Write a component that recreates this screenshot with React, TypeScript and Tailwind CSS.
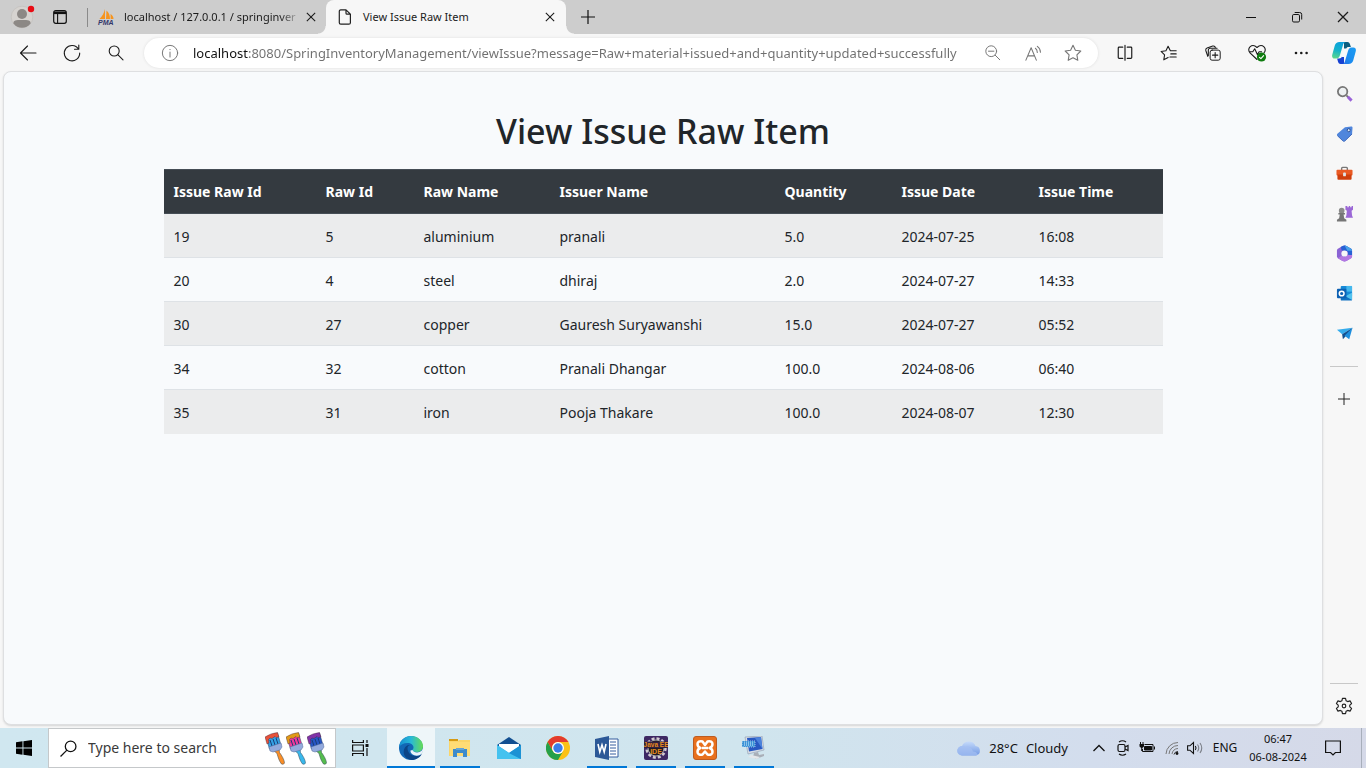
import type { ReactNode } from "react";

type Issue = { id: number; rawId: number; rawName: string; issuer: string; quantity: string; date: string; time: string };

const issues: Issue[] = [
  { id: 19, rawId: 5, rawName: "aluminium", issuer: "pranali", quantity: "5.0", date: "2024-07-25", time: "16:08" },
  { id: 20, rawId: 4, rawName: "steel", issuer: "dhiraj", quantity: "2.0", date: "2024-07-27", time: "14:33" },
  { id: 30, rawId: 27, rawName: "copper", issuer: "Gauresh Suryawanshi", quantity: "15.0", date: "2024-07-27", time: "05:52" },
  { id: 34, rawId: 32, rawName: "cotton", issuer: "Pranali Dhangar", quantity: "100.0", date: "2024-08-06", time: "06:40" },
  { id: 35, rawId: 31, rawName: "iron", issuer: "Pooja Thakare", quantity: "100.0", date: "2024-08-07", time: "12:30" },
];

const columns = [
  { label: "Issue Raw Id", width: "w-[152px]" },
  { label: "Raw Id", width: "w-[98px]" },
  { label: "Raw Name", width: "w-[136px]" },
  { label: "Issuer Name", width: "w-[225px]" },
  { label: "Quantity", width: "w-[117px]" },
  { label: "Issue Date", width: "w-[137px]" },
  { label: "Issue Time", width: "w-[134px]" },
];

/* Line icon on a 20 unit grid */
function Line({ children, className = "size-5", width = 1.1 }: { children: ReactNode; className?: string; width?: number }) {
  return (
    <svg viewBox="0 0 20 20" className={className} fill="none" stroke="currentColor" strokeWidth={width} strokeLinecap="round" strokeLinejoin="round" aria-hidden="true">
      {children}
    </svg>
  );
}

function IconButton({ label, className, children }: { label: string; className: string; children: ReactNode }) {
  return (
    <button type="button" aria-label={label} className={`flex shrink-0 items-center justify-center ${className}`}>
      {children}
    </button>
  );
}

const Cross = ({ className }: { className: string }) => (
  <svg viewBox="0 0 12 12" className={className} stroke="currentColor" strokeWidth="1.3" aria-hidden="true">
    <path d="M1 1l10 10M11 1L1 11" />
  </svg>
);

const starPath = "M10 2.2l2.4 5 5.4.8-3.9 3.8.9 5.5-4.8-2.6-4.8 2.6.9-5.5L2.2 8l5.400-.8z";

function TabStrip() {
  return (
    <header className="flex h-[34px] shrink-0 bg-[#cdcdcd] text-[#1b1b1b]">
      <IconButton label="Profile" className="w-11">
        <svg viewBox="0 0 26 26" className="size-[26px]" aria-hidden="true">
          <circle cx="13" cy="13" r="10.8" fill="#d6d3d0" stroke="#bfbcb8" strokeWidth=".6" />
          <circle cx="13" cy="10" r="5" fill="#8c8885" />
          <path d="M4.4 19.5c0-3 2-3.4 8.600-3.400s8.600.4 8.600 3.400A10.800 10.800 0 0 1 4.400 19.500z" fill="#8c8885" />
          <circle cx="22" cy="5" r="3.200" fill="#e80c14" />
        </svg>
      </IconButton>
      <IconButton label="Tab actions" className="w-8">
        <svg viewBox="0 0 14 14" className="size-[14px]" fill="none" stroke="#111" aria-hidden="true">
          <rect x=".7" y=".7" width="12.600" height="12.600" rx="2" strokeWidth="1.200" />
          <path d="M1 2.800h12" strokeWidth="2.600" />
          <path d="M4.600 4v9" strokeWidth="1.100" />
        </svg>
      </IconButton>
      <div className="ml-[11px] h-[19px] w-px self-center bg-[#8a8a8a]" />
      <div className="flex w-[238px] items-center pl-[9px] pr-[5px]">
        <svg viewBox="0 0 18 16" className="h-4 w-[18px] shrink-0" aria-hidden="true">
          <path d="M8 0v10H2.500C5 7.500 7 4.500 8 0zM9.500 1.500c2.500 2 3.500 5 3.500 8.500H9zM13.500 5c2 1.200 3 3 3 5h-2.800z" fill="#f7941d" />
          <text x="1" y="16" fontSize="7" fontWeight="700" fontStyle="italic" fontFamily="Liberation Sans, sans-serif" fill="#33366b" stroke="none">PMA</text>
        </svg>
        <a href="#phpmyadmin" className="ml-[9px] min-w-0 flex-1 overflow-hidden whitespace-nowrap text-[11px] leading-4 [mask-image:linear-gradient(90deg,#000_88%,transparent)]">
          localhost / 127.0.0.1 / springinver
        </a>
        <IconButton label="Close tab" className="size-5">
          <Cross className="size-[10px]" />
        </IconButton>
      </div>
      <div className="relative flex w-[240px] items-center rounded-t-lg bg-[#f7f7f7] pl-3 pr-[6px]">
        <span className="absolute -left-2 bottom-0 size-2 bg-[radial-gradient(circle_at_0_0,transparent_7px,#f7f7f7_8px)]" />
        <span className="absolute -right-2 bottom-0 size-2 bg-[radial-gradient(circle_at_100%_0,transparent_7px,#f7f7f7_8px)]" />
        <svg viewBox="0 0 14 16" className="h-4 w-[14px]" fill="none" stroke="#222" strokeWidth="1.200" strokeLinejoin="round" aria-hidden="true">
          <path d="M2.800.8H8l4.400 4.400v8.500a1.500 1.500 0 0 1-1.500 1.500H2.800a1.500 1.500 0 0 1-1.500-1.500V2.300A1.500 1.500 0 0 1 2.800.8zM8 .8v3.400a1 1 0 0 0 1 1h3.400" />
        </svg>
        <a href="#viewIssue" className="ml-[11px] flex-1 whitespace-nowrap text-[11px] leading-4">View Issue Raw Item</a>
        <IconButton label="Close tab" className="size-5">
          <Cross className="size-[10px]" />
        </IconButton>
      </div>
      <IconButton label="New tab" className="w-[43px]">
        <svg viewBox="0 0 14 14" className="size-[14px]" stroke="#111" strokeWidth="1.200" aria-hidden="true">
          <path d="M7 0v14M0 7h14" />
        </svg>
      </IconButton>
      <div className="ml-auto flex">
        <IconButton label="Minimize" className="w-[46px]">
          <svg viewBox="0 0 10 10" className="size-[10px]" stroke="#111" aria-hidden="true"><path d="M0 5.500h10" /></svg>
        </IconButton>
        <IconButton label="Restore" className="w-[46px]">
          <svg viewBox="0 0 10 10" className="size-[10px] overflow-visible" fill="none" stroke="#111" aria-hidden="true">
            <rect x=".5" y="2.500" width="7" height="7.500" rx="1.300" />
            <path d="M2.700.5h5a2 2 0 0 1 2 2v5" />
          </svg>
        </IconButton>
        <IconButton label="Close" className="w-[46px]">
          <Cross className="size-3" />
        </IconButton>
      </div>
    </header>
  );
}

function Toolbar() {
  return (
    <nav aria-label="Browser" className="flex h-[37px] shrink-0 items-center bg-[#f7f7f7] pl-[6px] pt-px text-[#1b1b1b]">
      <IconButton label="Back" className="h-8 w-11"><Line><path d="M18 10H2.500M9.500 3l-7 7 7 7" /></Line></IconButton>
      <IconButton label="Refresh" className="h-8 w-11"><Line><path d="M16.500 6A7.700 7.700 0 1 0 17.700 10M16.800 2v4.300h-4.300" /></Line></IconButton>
      <IconButton label="Search" className="h-8 w-11"><Line><circle cx="8.200" cy="8" r="5" /><path d="M12 11.800l5 5" /></Line></IconButton>
      <div className="ml-[6px] flex h-[30px] min-w-0 flex-1 items-center rounded-full bg-white pl-[10px] pr-[5px] text-[#767676] shadow-[0_0_3px_#dddddd]">
        <IconButton label="Site information" className="w-8">
          <Line className="size-[18px]"><circle cx="10" cy="10" r="8.500" /><path d="M10 9v5.500M10 6v.3" /></Line>
        </IconButton>
        <input
          aria-label="Address"
          readOnly
          value="localhost:8080/SpringInventoryManagement/viewIssue?message=Raw+material+issued+and+quantity+updated+successfully"
          className="ml-[7px] min-w-0 flex-1 bg-[linear-gradient(90deg,#111_56px,#6f6f6f_56px)] bg-clip-text text-[13px] leading-5 text-transparent outline-none"
        />
        <IconButton label="Zoom out" className="w-10"><Line className="size-[18px]"><circle cx="8" cy="8" r="6" /><path d="M5 8h6M12.500 12.500l5 5" /></Line></IconButton>
        <IconButton label="Read aloud" className="w-10">
          <Line className="size-[19px]"><path d="M2 17L7.500 4 13 17M4 12.500h7M12 4.500q2 1.500 2 4.500M14 2.500q3.300 2.200 3.300 6.200" /></Line>
        </IconButton>
        <IconButton label="Add to favorites" className="w-10"><Line><path d={starPath} /></Line></IconButton>
      </div>
      <div className="ml-[5px] flex">
        <IconButton label="Split screen" className="h-8 w-11">
          <Line className="size-[18px]"><path d="M7.500 3.500h-4a1 1 0 0 0-1 1v10.500a1 1 0 0 0 1 1h4M12.500 3.500h4a1 1 0 0 1 1 1v10.500a1 1 0 0 1-1 1h-4M10 1.500v16.500" strokeWidth="1.300" /></Line>
        </IconButton>
        <IconButton label="Favorites" className="h-8 w-11">
          <Line className="size-[18px]"><path d="M11.500 7.500L9 2.500l-2.400 5-5.400.8 3.900 3.800-.9 5.500L9 14.900M11.500 7.500h6.500M12 11h6M11 14.500h7" strokeWidth="1.200" /></Line>
        </IconButton>
        <IconButton label="Collections" className="h-8 w-11">
          <Line className="size-[18px]"><rect x="6.800" y="6.800" width="11.200" height="11.200" rx="2.200" /><path d="M12.400 9.500v5.800M9.500 12.400h5.800M4.200 13.800L2 7.200a2.200 2.200 0 0 1 1.400-2.700l6.300-2.200a2.200 2.200 0 0 1 2.800 1.400M4.800 12.800v-6a2 2 0 0 1 2-2h7.700" strokeWidth="1.200" /></Line>
        </IconButton>
        <IconButton label="Browser essentials" className="h-8 w-11">
          <Line>
            <path d="M10 16.500L3 9.800a4.200 4.200 0 0 1 0-6c1.900-1.700 4.800-1.500 7 .7 2.200-2.200 5.100-2.400 7-.7a4.200 4.200 0 0 1 0 6M2.500 8.800h3.300l1.900-3 2.800 6 1.600-3h2.500" />
            <circle cx="14.500" cy="14" r="4.600" fill="#107c10" stroke="none" /><path d="M12.500 14.300l1.400 1.400 2.700-3" stroke="#fff" />
          </Line>
        </IconButton>
        <IconButton label="Settings and more" className="h-8 w-11">
          <Line><g fill="currentColor" stroke="none"><circle cx="5" cy="10" r="1.300" /><circle cx="10.300" cy="10" r="1.300" /><circle cx="15.600" cy="10" r="1.300" /></g></Line>
        </IconButton>
        <IconButton label="Copilot" className="mr-px h-8 w-[42px]">
          <svg viewBox="0 0 24 24" className="size-6" aria-hidden="true">
            <defs>
              <linearGradient id="cp1" x1=".5" y1="0" x2=".3" y2="1"><stop stopColor="#0aa0dc" /><stop offset=".5" stopColor="#14b2cb" /><stop offset="1" stopColor="#5bd78c" /></linearGradient>
              <linearGradient id="cp2" x1="1" y1="0" x2="0" y2="1"><stop stopColor="#1c9cf2" /><stop offset=".6" stopColor="#1b8df0" /><stop offset="1" stopColor="#2a6fe6" /></linearGradient>
            </defs>
            <path d="M12 1h3.500c1.200 0 2 .8 2.400 2l1 3h-1.900c-1.800 0-2.500.6-3 2.200L12 8z" fill="#0b5f80" />
            <path d="M12 23H8.500c-1.200 0-2-.8-2.400-2l-1-3.500H7c1.800 0 2.500-.6 3-2.200l2 .7z" fill="#1641d2" />
            <path d="M7.500 1h6.200c-1.700.3-2.300 1.500-2.800 3.300L8 14c-.7 2.300-1.500 3.500-3.500 3.500h-2C.4 17.500-.3 15.700.3 13.500l2.500-9C3.500 2.200 5 1 7.500 1z" fill="url(#cp1)" />
            <path d="M16.500 23h-6.200c1.700-.3 2.300-1.500 2.800-3.300L16 10c.7-2.300 1.500-3.500 3.500-3.500h2c2.100 0 2.800 1.800 2.200 4l-2.500 9C20.500 21.800 19 23 16.500 23z" fill="url(#cp2)" />
            <path d="M11.800 7.500h3L12.300 16H9.200z" fill="#f5fafc" />
          </svg>
        </IconButton>
      </div>
    </nav>
  );
}

function IssuePage() {
  return (
    <main className="ml-[3px] mb-[3px] min-w-0 flex-1 overflow-auto rounded-lg border border-[#dedfe1] bg-[#f8fafc] text-[#212529] shadow-[0_1px_2px_#d5d5d5]">
      <div className="mx-auto max-w-[999px] pt-[34px]">
        <h1 className="mb-[13px] text-center text-[34px] font-medium leading-[50px]">View Issue Raw Item</h1>
        <table className="w-full table-fixed border-collapse text-left text-[14px] leading-[21px]">
          <thead>
            <tr className="h-11 border-y border-[#454d55] bg-[#343a40] text-white">
              {columns.map((c) => (
                <th key={c.label} scope="col" className={`${c.width} pl-[10px] font-bold`}>{c.label}</th>
              ))}
            </tr>
          </thead>
          <tbody>
            {issues.map((r) => (
              <tr key={r.id} className="h-11 border-t border-[#dee2e6] odd:bg-[#ebeced] first:border-[#454d55]">
                {[r.id, r.rawId, r.rawName, r.issuer, r.quantity, r.date, r.time].map((cell, i) => (
                  <td key={columns[i].label} className="whitespace-nowrap pl-[10px] pt-px">{cell}</td>
                ))}
              </tr>
            ))}
          </tbody>
        </table>
      </div>
    </main>
  );
}

const sidebarApps: { label: string; art: ReactNode }[] = [
  {
    label: "Search",
    art: <><path d="M11 11l2 2" stroke="#777" strokeWidth="2" /><path d="M12.500 12.500l4 4" stroke="#9a63d8" strokeWidth="3.200" /><circle cx="7" cy="7" r="5" fill="#eef1f2" stroke="#777" strokeWidth="1.900" /></>,
  },
  {
    label: "Shopping",
    art: <><path d="M9.500 2.500L16 1.500c1 0 1.500.5 1.500 1.500l-.5 6.500-7.500 7.300c-.7.700-1.500.7-2.200 0L1.500 11.500c-.7-.7-.7-1.500 0-2.200z" fill="#5086dc" /><path d="M1.500 11.300l5.800 5.500c.7.700 1.500.7 2.200 0L17 9.500" fill="none" stroke="#3a66bd" /><circle cx="13.500" cy="5.500" r="1.600" fill="#dce9fa" stroke="#274c92" /></>,
  },
  {
    label: "Tools",
    art: <><path d="M6 6V3.500q0-1 1-1h4q1 0 1 1V6" fill="none" stroke="#777" strokeWidth="1.500" /><rect x=".5" y="5" width="17" height="6" rx="1" fill="#ea5a23" /><path d="M1.500 10h15v4.500q0 1-1 1h-13q-1 0-1-1z" fill="#cf3f0c" /><rect x="7.500" y="8" width="3" height="4" rx="1" fill="#dfe4e8" /></>,
  },
  {
    label: "Games",
    art: <><path d="M10 1h2v1.500h1.500V1h1.500v1.500h1.500V1h1.500v4l-1.500 1 .5 5 1 2.500h-8l1-2.500.5-5-1.500-1z" fill="#9b68d6" /><circle cx="6" cy="6" r="3" fill="#8b8b8b" /><path d="M2.500 8.500h7v1.500H8l.7 4 2.300 1.500v2H1v-2L3.300 14 4 10H2.500z" fill="#767676" /></>,
  },
  {
    label: "Microsoft 365",
    art: <><path d="M1 6q0-1.300 1-2l5-3q2-1 4 0l5 3q1 .7 1 2v6q0 1.300-1 2l-5 3q-2 1-4 0l-5-3q-1-.7-1-2z" fill="#8a63d4" /><path d="M7 1q2-1 4 0l5 3q1 .7 1 2v5l-4.500-1V7L6 5.500 5 2.200z" fill="#2761d4" /><path d="M9 .3q1 .1 2 .7l5 3q1 .7 1 2L12 6z" fill="#48a3e8" /><path d="M17 10.500V12q0 1.300-1 2l-5 3q-2 1-4 0l-5-3 4-2.500 3 1.500 3.500-2.300z" fill="#b377e2" /><circle cx="9" cy="9" r="3.300" fill="#f7f7f7" /></>,
  },
  {
    label: "Outlook",
    art: <><rect x="5" y="1" width="12" height="12" rx="1" fill="#168ad7" /><path d="M11 1h6v6h-6z" fill="#45b8ed" /><path d="M5 8l6 4 6-4v7.500q0 1-1 1H6q-1 0-1-1z" fill="#1272c2" /><path d="M17 8v8L10 12z" fill="#52c2ee" /><rect x="1" y="4" width="10" height="10" rx="1" fill="#0d61b3" /><circle cx="6" cy="9" r="2.500" fill="none" stroke="#fff" strokeWidth="1.600" /></>,
  },
  {
    label: "Drop",
    art: <><path d="M1 5l16.500-2L6.500 9.800z" fill="#35acec" /><path d="M17.500 3L6.500 9.800l.8 5.200 2.700-2.800z" fill="#114f8f" /><path d="M17.500 3L9 11.500l5 3.500z" fill="#1c8ddd" /></>,
  },
];

function Sidebar() {
  return (
    <aside aria-label="Sidebar" className="flex w-[43px] shrink-0 flex-col items-center pr-px pt-[2px] text-[#222]">
      {sidebarApps.map((a) => (
        <IconButton key={a.label} label={a.label} className="h-10 w-10">
          <svg viewBox="0 0 18 18" className="size-[17px]" aria-hidden="true">{a.art}</svg>
        </IconButton>
      ))}
      <div className="mt-[13px] h-px w-7 bg-[#c8c8c8]" />
      <IconButton label="Customize" className="mt-3 h-10 w-10">
        <svg viewBox="0 0 12 12" className="size-3" stroke="currentColor" aria-hidden="true"><path d="M6 0v12M0 6h12" /></svg>
      </IconButton>
      <div className="mt-auto h-px w-7 bg-[#c8c8c8]" />
      <IconButton label="Settings" className="h-11 w-10">
        <Line className="size-[18px]" width={1.3}>
          <path d="M8.300 1.500h3.400l.6 2.600 1.800 1 2.600-.8 1.700 3-2 1.800v1.800l2 1.800-1.700 3-2.600-.8-1.800 1-.6 2.600H8.300l-.6-2.600-1.800-1-2.600.8-1.700-3 2-1.800V9.100l-2-1.800 1.700-3 2.600.8 1.800-1z" /><circle cx="10" cy="10" r="2" />
        </Line>
      </IconButton>
    </aside>
  );
}

function Brush({ paint, bristle, handle }: { paint: string; bristle: string; handle: string }) {
  return (
    <svg viewBox="0 0 21 33" className="h-[33px] w-[21px]" aria-hidden="true">
      <path d="M8 18l6-1.500.5 4c2 2.500 5 7.500 5 10.500q-.8 2-3 1c-2.500-3-3.500-7-4.500-10.500z" fill={handle} stroke="#314453" strokeWidth=".5" />
      <path d="M1 5.500L12.500 1l3.500 12-11.500 4z" fill={bristle} stroke="#273a5a" strokeWidth=".5" />
      <path d="M5 8l2 6M8 7l2 6M11 6l2 6" stroke="#1a3d77" />
      <path d="M0 5Q6 1 12.500.5L14 5l-3 .5-1-1-3 2-2-.5-1.500 1.500.5 3.500-2 1z" fill={paint} stroke="#40283b" strokeWidth=".4" />
      <path d="M4 15l12-4 1 4-2 3-7 2-3-1z" fill="#93aadd" stroke="#50699b" strokeWidth=".5" />
    </svg>
  );
}

const taskApps: { label: string; active?: boolean; running?: boolean; art: ReactNode }[] = [
  {
    label: "Microsoft Edge",
    active: true,
    art: <>
      <defs><linearGradient id="edgeTop"><stop stopColor="#168ed1" /><stop offset=".5" stopColor="#28b9d7" /><stop offset="1" stopColor="#66dc54" /></linearGradient></defs>
      <circle cx="12" cy="12" r="12" fill="#1267b5" />
      <path d="M0 11C1 4 6 0 12 0c7 0 12 5 12 10 0 4-3 6-6.500 6-3 0-4-1-4-2 0-.7 1-1 1-2.500C14.500 9 12 7 8.500 7 4.500 7 1.500 9 0 11z" fill="url(#edgeTop)" />
      <path d="M8.500 12c0 5 4 8 8 8 3 0 5-1 6.300-2C21 21.500 17 24 12.500 24 7 23 3.500 19 5 13.500c.8-3 3.500-5 6-4.500-1.500.5-2.500 1.500-2.500 3z" fill="#0c4587" />
      <path d="M13.500 14c.6 2 4 3 7 2 2-.7 3-2 3.500-4 .5 4-1 6-3 7-5 2-10-1-9.500-4.500z" fill="#e9f4f9" />
    </>,
  },
  {
    label: "File Explorer",
    running: true,
    art: <><path d="M1 3h9v3H1z" fill="#d69a13" /><path d="M1 5h9l1-1h11v16H1z" fill="#fbd568" /><path d="M2 6h20v14H2z" fill="#ffdc75" /><path d="M5 13h14v8h-4v-4H9v4H5z" fill="#3e8ccc" /><path d="M8 12h8v2H8z" fill="#62a5d7" /></>,
  },
  { label: "Mail", art: <><path d="M0 9L12 1l12 8v6H0z" fill="#124f91" /><path d="M2 8h20v5l-10 5L2 13z" fill="#fff" /><path d="M0 9l12 8 12-8v14H0z" fill="#24a8e8" /><path d="M0 9l12 8 12 6H0z" fill="#45c2ef" /><path d="M12 17l12-8v14z" fill="#1d92d4" /></> },
  {
    label: "Google Chrome",
    art: <><circle cx="12" cy="12" r="12" fill="#fbc116" /><path d="M1.600 6A12 12 0 0 1 22.400 6H12a6 6 0 0 0-5.200 9z" fill="#e33b2e" /><path d="M1.600 6a12 12 0 0 0 10.400 18l5.200-9A6 6 0 0 1 6.800 15z" fill="#25a04b" /><circle cx="12" cy="12" r="6" fill="#fff" /><circle cx="12" cy="12" r="4.700" fill="#3b7de9" /></>,
  },
  {
    label: "Word",
    running: true,
    art: <><path d="M12 3h11v18H12z" fill="#fff" stroke="#345d9e" /><path d="M15 6h6M15 9h6M15 12h6M15 15h6M15 18h6" stroke="#345d9e" /><path d="M0 3l14-3v24L0 21z" fill="#2c5897" /><path d="M3 8l1.800 8L7 9l2.200 7L11 8" fill="none" stroke="#fff" strokeWidth="1.600" /></>,
  },
  {
    label: "Eclipse Java EE IDE",
    running: true,
    art: <><rect width="24" height="24" rx="2" fill="#3e2863" /><circle cx="12" cy="12" r="9.500" fill="none" stroke="#d2cbd0" strokeWidth="2.500" strokeDasharray="3 2" /><circle cx="12" cy="12" r="8" fill="#211a24" stroke="#aaa" /><path d="M0 5.500h24v6.500H0z" fill="#33213f" /><text x="12" y="11" fontSize="6.500" textAnchor="middle" fontWeight="700" fontFamily="Liberation Sans, sans-serif" fill="#e68b1c">Java EE</text><text x="12" y="17.500" fontSize="7" textAnchor="middle" fontWeight="700" fontFamily="Liberation Sans, sans-serif" fill="#e68b1c">IDE</text></>,
  },
  {
    label: "XAMPP",
    running: true,
    art: <><rect x=".5" y=".5" width="23" height="23" rx="2.500" fill="#e8701d" stroke="#bd5b20" /><path d="M9.500 5.500C6.500 4.500 4.500 6 4.500 8s1.500 3.500 3 4c-2 .5-3 2-3 4s2.500 3.500 5 2.500l2.500-3 2.500 3c3 1 5-.5 5-2.500s-1-3.500-3-4c1.500-.5 3-2 3-4s-2-3.500-5-2.500L12 9z" fill="none" stroke="#fff" strokeWidth="2.500" strokeLinejoin="round" /><path d="M9 12h6" stroke="#fff" strokeWidth="2.500" /></>,
  },
  {
    label: "XAMPP Control Panel",
    running: true,
    art: <><path d="M3 1l17-1 2 14-16 4z" fill="#d8dde5" stroke="#8d9bae" strokeWidth=".6" /><path d="M5 2l14-1 1.500 12L7 15.500z" fill="#2859c2" /><path d="M13 2l6-1 1.500 12z" fill="#4b82dc" /><path d="M0 5h13v6H0z" fill="#3b92d6" stroke="#d1e7f6" strokeWidth=".7" strokeDasharray="1 1" /><path d="M2 7h9M2 9h9" stroke="#d6f1ff" strokeDasharray="1 1" /><path d="M12 17l4-1 1 3 5-1v2l-8 3-3-2z" fill="#a9afb8" /><path d="M9 19l9 2-3 2-9-2z" fill="#e4e7ea" /></>,
  },
];

function Taskbar() {
  return (
    <footer className="flex h-10 shrink-0 items-stretch bg-[linear-gradient(90deg,#d0e7f0,#d0e5ee_55%,#d3dded_80%,#d5d9e8)] text-[#111]">
      <IconButton label="Start" className="w-12">
        <svg viewBox="0 0 16 16" className="size-4" fill="#000" aria-hidden="true"><path d="M0 2.200L6.500 1.300v6.200H0zM7.400 1.200L16 0v7.500H7.400zM0 8.400h6.500v6.300L0 13.800zM7.400 8.400H16V16l-8.600-1.200z" /></svg>
      </IconButton>
      <label className="flex w-[288px] items-center border border-[#c5c8ca] bg-white pl-[11px] pr-[7px]">
        <svg viewBox="0 0 16 16" className="size-[17px] shrink-0" fill="none" stroke="#111" strokeWidth="1.200" aria-hidden="true"><circle cx="10" cy="6" r="5" /><path d="M6.500 9.500L.5 15.500" /></svg>
        <input type="text" aria-label="Search" placeholder="Type here to search" className="ml-[11px] min-w-0 flex-1 bg-transparent text-[14px] leading-5 outline-none placeholder:text-[#3a3a3a]" />
        <span className="flex">
          <Brush paint="#e8523a" bristle="#34a0e3" handle="#fa8e27" />
          <Brush paint="#e19a17" bristle="#ec3a9a" handle="#39b8ec" />
          <Brush paint="#8133a8" bristle="#2756c4" handle="#55bd4e" />
        </span>
      </label>
      <IconButton label="Task view" className="w-12">
        <svg viewBox="0 0 17 16" className="h-4 w-[17px]" fill="none" stroke="#111" strokeWidth="1.200" aria-hidden="true"><path d="M.6 0v2.500h10.800V0M.6 16v-2.500h10.800V16M.6 5h10.800v6H.6zM15 0v3M15 8v8" /><path d="M13.500 4h3v3h-3z" fill="#111" stroke="none" /></svg>
      </IconButton>
      <div className="ml-[3px] flex gap-px">
        {taskApps.map((a) => (
          <button key={a.label} type="button" aria-label={a.label} className={`relative flex w-12 items-center justify-center ${a.active ? "bg-[#eef6f9]" : ""}`}>
            <svg viewBox="0 0 24 24" className="size-6" aria-hidden="true">{a.art}</svg>
            {a.active && <span className="absolute inset-x-0 bottom-0 h-[2px] bg-[#0078d7]" />}
            {a.running && <span className="absolute inset-x-1 bottom-0 h-[2px] bg-[#0078d7]" />}
          </button>
        ))}
      </div>
      <div className="ml-auto flex items-stretch">
        <button type="button" className="flex items-center whitespace-nowrap text-[13px] leading-5">
          <svg viewBox="0 0 24 16" className="h-4 w-6" aria-hidden="true">
            <defs><linearGradient id="cloud" x1="0" y1="0" x2="0" y2="1"><stop stopColor="#c5dafa" /><stop offset="1" stopColor="#7199e4" /></linearGradient></defs>
            <path d="M5 15.500a4.700 4.700 0 0 1 0-9.400A7.300 7.300 0 0 1 18.500 6a4.800 4.800 0 0 1 .5 9.500z" fill="url(#cloud)" />
            <path d="M5 15.500a4.700 4.700 0 1 1 3-8.200 6 6 0 0 1 8 4.200q3-.5 5 3.300l-2 .7z" fill="#a5c1f2" opacity=".7" />
          </svg>
          <span className="ml-2">28°C</span>
          <span className="ml-2">Cloudy</span>
        </button>
        <IconButton label="Show hidden icons" className="ml-[19px] w-6"><svg viewBox="0 0 12 8" className="h-2 w-3" fill="none" stroke="#111" strokeWidth="1.300" aria-hidden="true"><path d="M.5 7L6 1.500 11.500 7" /></svg></IconButton>
        <IconButton label="Meet now" className="w-6"><svg viewBox="0 0 12 16" className="h-4 w-3" fill="none" stroke="#111" strokeWidth="1.200" aria-hidden="true"><rect x="1" y="4.500" width="7" height="7" rx="1.500" /><path d="M8 7l3-1.500v5L8 9M2 2q3.500-2.500 7 0M2 14q3.500 2.500 7 0" /></svg></IconButton>
        <IconButton label="Battery" className="w-6"><svg viewBox="0 0 16 12" className="h-3 w-4" fill="none" stroke="#111" aria-hidden="true"><path d="M5.500 2.500h8.500v7H3.500V7" /><path d="M5.500 4.500h7v3.500h-7z" fill="#111" /><path d="M15.500 4.500v3M1.500 0v2.500M4 0v2.500" /><path d="M.5 2H5v2.500L3.300 6v3H2.200V6L.5 4.500z" fill="#111" stroke="none" /></svg></IconButton>
        <IconButton label="Network" className="w-[26px]"><svg viewBox="0 0 14 14" className="size-[14px]" fill="none" stroke="#777" aria-hidden="true"><path d="M1 13A12 12 0 0 1 13 1.500M4 13a9 9 0 0 1 9-8.500M7 13a6 6 0 0 1 6-5.500" /><path d="M9 13.500a4 4 0 0 1 4-3" stroke="#333" /><circle cx="12" cy="12.500" r="1.400" fill="#111" stroke="none" /></svg></IconButton>
        <IconButton label="Volume" className="w-5"><svg viewBox="0 0 16 14" className="h-[14px] w-4" fill="none" stroke="#111" strokeWidth="1.100" aria-hidden="true"><path d="M.6 4.800h2.300L6.500 1.500v11L2.900 9.200H.6zM8.300 5q1.500 2 0 4" /><path d="M10.500 3.500q2.500 3.500 0 7M13 2q3.500 5 0 10" stroke="#7b7f88" /></svg></IconButton>
        <button type="button" className="w-10 text-center text-[12px] leading-4">ENG</button>
        <button type="button" className="mr-[5px] w-[66px] whitespace-nowrap text-center text-[11px] leading-[18px]"><span className="block">06:47</span><span className="block">06-08-2024</span></button>
        <IconButton label="Notifications" className="w-[34px]"><svg viewBox="0 0 16 16" className="size-4" fill="none" stroke="#111" strokeWidth="1.200" aria-hidden="true"><path d="M.6 1h14.800v11.500h-5L8 15l-2.400-2.500h-5z" /></svg></IconButton>
        <div className="ml-[11px] w-[5px] border-l border-[#a8afbb]" />
      </div>
    </footer>
  );
}

export default function App() {
  return (
    <div className="flex h-screen flex-col bg-[#f7f7f7] font-['Noto_Sans','Open_Sans',sans-serif]">
      <TabStrip />
      <Toolbar />
      <div className="flex min-h-0 flex-1">
        <IssuePage />
        <Sidebar />
      </div>
      <Taskbar />
    </div>
  );
}
